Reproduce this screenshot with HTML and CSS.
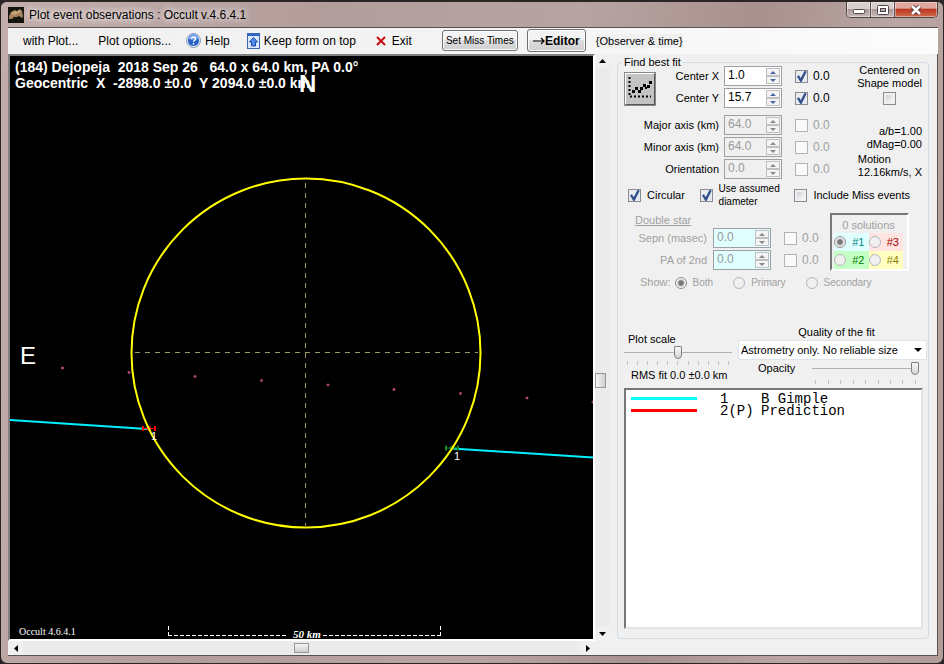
FILE: index.html
```html
<!DOCTYPE html>
<html lang="en">
<head>
  <meta charset="UTF-8" />
  <meta name="viewport" content="width=device-width, initial-scale=1.0"/>
  <title>Plot event observations : Occult v.4.6.4.1</title>
  <link rel="stylesheet" href="styles.css">
</head>
<body>
<div class="window">

  <header class="titlebar">
    <svg class="app-icon" width="16" height="16" viewBox="0 0 16 16">
      <rect width="16" height="16" fill="#15140f"/>
      <path d="M1 9l2-4 4-2 2 1 3-2 2 2 1 5-1 2-3-2-2 1-3 0-2 2-3 0z" fill="#a5805c"/>
      <path d="M3 6l4-2 2 1 3-2 1 2-4 2-4 1z" fill="#c9a57c"/>
    </svg>
    <h1>Plot event observations : Occult v.4.6.4.1</h1>
    <div class="window-buttons">
      <button class="win-btn" aria-label="Minimize">
        <svg width="14" height="10" viewBox="0 0 14 10"><rect x="1.500" y="4.500" width="11" height="4" rx="1" fill="#fff" stroke="#4d4648"/></svg>
      </button>
      <button class="win-btn" aria-label="Maximize">
        <svg width="14" height="10" viewBox="0 0 14 10"><rect x="1.500" y=".5" width="11" height="9" rx="1" fill="#fff" stroke="#4d4648"/><rect x="4.500" y="3.500" width="5" height="3" fill="#b9a9a9" stroke="#4d4648"/></svg>
      </button>
      <button class="win-btn close" aria-label="Close">
        <svg width="14" height="10" viewBox="0 0 14 10"><path d="M3 1l8 8M11 1l-8 8" stroke="#5c3a38" stroke-width="4.500"/><path d="M3 1l8 8M11 1l-8 8" stroke="#fff" stroke-width="2.600"/></svg>
      </button>
    </div>
  </header>

  <nav class="toolbar">
    <button class="menu-item with-plot">with Plot...</button>
    <button class="menu-item options">Plot options...</button>
    <button class="menu-item help">
      <svg width="15" height="15" viewBox="0 0 15 15">
        <circle cx="7.500" cy="7.500" r="7" fill="#e4ecfa" stroke="#8a9ab8"/>
        <circle cx="7.500" cy="7.500" r="5.600" fill="#2c62c8"/>
        <path d="M2.500 6a5 5 0 0 1 10 0q-5 2-10 0z" fill="#6c9cec"/>
        <path d="M5.500 6q0-2 2-2t2 1.700q0 1-1 1.600t-1 1.500M7.500 10v1.500" fill="none" stroke="#fff" stroke-width="1.400"/>
      </svg>
      Help
    </button>
    <button class="menu-item ontop">
      <svg width="13" height="16" viewBox="0 0 13 16">
        <rect x=".5" y=".5" width="12" height="15" fill="#dbe8fb" stroke="#3c66b4"/>
        <rect x="1" y="1" width="11" height="2" fill="#2f64c6"/>
        <path d="M6.500 4.500l4 4.500h-2v4h-4v-4h-2z" fill="#4f8df0" stroke="#1d4aa4"/>
      </svg>
      Keep form on top
    </button>
    <button class="menu-item exit">
      <svg width="10" height="10" viewBox="0 0 10 10"><path d="M1 1l8 8M9 1l-8 8" stroke="#c80c10" stroke-width="2"/></svg>
      Exit
    </button>
    <button class="push miss">Set Miss Times</button>
    <button class="push editor">
      <svg width="12" height="8" viewBox="0 0 12 8"><path d="M0 4h11M8 1l3 3-3 3" fill="none" stroke="#000" stroke-width="1.200"/></svg>Editor
    </button>
    <span class="observer">{Observer &amp; time}</span>
  </nav>

  <main class="workspace">
    <section class="plot-area">
      <div class="plot">
        <svg viewBox="0 0 583 583">
          <rect width="583" height="583" fill="#000"/>
          <!-- axes -->
          <path class="axis" d="M125 296.500h343M295.500 127v343"/>
          <!-- predicted track -->
          <g class="track">
            <circle cx="52.500" cy="312" r="1"/><circle cx="119" cy="316.500" r="1"/>
            <circle cx="185" cy="320.500" r="1"/><circle cx="251.500" cy="324.500" r="1"/>
            <circle cx="318" cy="329" r="1"/><circle cx="384" cy="333.500" r="1"/>
            <circle cx="450.500" cy="337.500" r="1"/><circle cx="517" cy="342" r="1"/>
            <circle cx="583" cy="346" r="1"/>
          </g>
          <!-- chords -->
          <path class="chord" d="M0 364L137 373M442 392.500L583 401.500"/>
          <path class="event-d bar" d="M133 370v5M145 370v5"/>
          <path class="event-d" d="M133 372.500h12"/>
          <circle class="event-d" cx="139" cy="372.500" r="2"/>
          <path class="event-r bar" d="M436 389.500v5M448 389.500v5"/>
          <path class="event-r" d="M436 392h12"/>
          <circle class="event-r" cx="442" cy="392" r="2"/>
          <circle class="body" cx="296" cy="297" r="174.500"/>
          <text class="chord-no" x="141" y="384">1</text>
          <text class="chord-no" x="444" y="404">1</text>
          <!-- scale bar -->
          <path class="scale" d="M158 579.500h120M313 579.500h118"/>
          <path class="scale" d="M158.500 570v10M430.500 570v10"/>
          <text class="scale-label" x="283" y="582">50 km</text>
          <text class="version" x="9" y="579">Occult 4.6.4.1</text>
          <text class="heading" x="5" y="16">(184) Dejopeja  2018 Sep 26   64.0 x 64.0 km, PA 0.0°</text>
          <text class="heading" x="5" y="32">Geocentric  X  -2898.0 ±0.0  Y 2094.0 ±0.0 km</text>
          <text class="compass north" x="289" y="36">N</text>
          <text class="compass" x="10" y="308">E</text>
        </svg>
      </div>
      <div class="scroll vertical">
        <button aria-label="Scroll up"><svg width="7" height="4" viewBox="0 0 7 4"><path d="M0 4l3.500-4 3.500 4z"/></svg></button>
        <span class="before"></span><span class="thumb"></span><span class="after"></span>
        <button aria-label="Scroll down"><svg width="7" height="4" viewBox="0 0 7 4"><path d="M0 0h7l-3.500 4z"/></svg></button>
      </div>
      <div class="scroll horizontal">
        <button aria-label="Scroll left"><svg width="4" height="7" viewBox="0 0 4 7"><path d="M4 0v7l-4-3.500z"/></svg></button>
        <span class="thumb"></span>
        <button aria-label="Scroll right"><svg width="4" height="7" viewBox="0 0 4 7"><path d="M0 0v7l4-3.500z"/></svg></button>
      </div>
    </section>

    <fieldset class="panel">
      <legend>Find best fit</legend>

      <div class="fit">
        <div class="fit-grid">
          <button class="fit-button" aria-label="Find best fit">
            <svg width="26" height="26" viewBox="0 0 26 26">
              <path d="M2.500 3v20M3 22.500h21" fill="none" stroke="#000" stroke-width="2" stroke-dasharray="2 2"/>
              <path d="M5 18l3-3M10 15l3 3M17 13l3-3" fill="none" stroke="#fff"/>
              <path d="M5 16h3v3h-3zM8 13h3v3h-3zM11 16h3v3h-3zM13 13h3v3h-3zM16 10h3v3h-3zM18 13h2v2h-2zM20 11h3v3h-3zM22 7h3v3h-3z"/>
            </svg>
          </button>
          <label for="cx">Center X</label>
          <div class="spin"><input id="cx" type="text" value="1.0"><span class="arrows"><button aria-label="Up"></button><button aria-label="Down"></button></span></div>
          <label class="flag"><input type="checkbox" checked>0.0</label>
          <label for="cy">Center Y</label>
          <div class="spin"><input id="cy" type="text" value="15.7"><span class="arrows"><button aria-label="Up"></button><button aria-label="Down"></button></span></div>
          <label class="flag"><input type="checkbox" checked>0.0</label>

          <label class="wide first" for="major">Major axis (km)</label>
          <div class="spin first"><input id="major" type="text" value="64.0" disabled><span class="arrows"><button aria-label="Up" disabled></button><button aria-label="Down" disabled></button></span></div>
          <label class="flag off first"><input type="checkbox" disabled>0.0</label>
          <label class="wide" for="minor">Minor axis (km)</label>
          <div class="spin"><input id="minor" type="text" value="64.0" disabled><span class="arrows"><button aria-label="Up" disabled></button><button aria-label="Down" disabled></button></span></div>
          <label class="flag off"><input type="checkbox" disabled>0.0</label>
          <label class="wide" for="orient">Orientation</label>
          <div class="spin"><input id="orient" type="text" value="0.0" disabled><span class="arrows"><button aria-label="Up" disabled></button><button aria-label="Down" disabled></button></span></div>
          <label class="flag off"><input type="checkbox" disabled>0.0</label>
        </div>
        <div class="fit-side">
          <label class="shape">Centered on<br>Shape model<input type="checkbox"></label>
          <p class="ratio">a/b=1.00<br>dMag=0.00</p>
          <p class="motion">Motion<br>12.16km/s, X</p>
        </div>
      </div>

      <div class="options-row">
        <label><input type="checkbox" checked>Circular</label>
        <label class="assumed"><input type="checkbox" checked><span>Use assumed<br>diameter</span></label>
        <label><input type="checkbox">Include Miss events</label>
      </div>

      <div class="double">
        <div class="double-fields">
          <h2>Double star</h2>
          <label for="sepn">Sepn (masec)</label>
          <div class="spin"><input id="sepn" type="text" value="0.0" disabled><span class="arrows"><button aria-label="Up" disabled></button><button aria-label="Down" disabled></button></span></div>
          <label class="flag off"><input type="checkbox" disabled>0.0</label>
          <label for="pa">PA of 2nd</label>
          <div class="spin"><input id="pa" type="text" value="0.0" disabled><span class="arrows"><button aria-label="Up" disabled></button><button aria-label="Down" disabled></button></span></div>
          <label class="flag off"><input type="checkbox" disabled>0.0</label>
        </div>
        <div class="solutions">
          <p>0 solutions</p>
          <label class="s1"><input type="radio" name="solution" checked disabled>#1</label>
          <label class="s3"><input type="radio" name="solution" disabled>#3</label>
          <label class="s2"><input type="radio" name="solution" disabled>#2</label>
          <label class="s4"><input type="radio" name="solution" disabled>#4</label>
        </div>
      </div>
      <div class="show">
        <span>Show:</span>
        <label><input type="radio" name="show" checked disabled>Both</label>
        <label><input type="radio" name="show" disabled>Primary</label>
        <label><input type="radio" name="show" disabled>Secondary</label>
      </div>

      <div class="display">
        <div class="scale-box">
          <label for="plotScale">Plot scale</label>
          <input id="plotScale" type="range" min="0" max="100" value="50">
          <div class="ticks"><i></i><i></i><i></i><i></i><i></i><i></i><i></i><i></i><i></i><i></i><i></i></div>
          <p>RMS fit 0.0 ±0.0 km</p>
        </div>
        <div class="quality-box">
          <label for="quality">Quality of the fit</label>
          <select id="quality"><option>Astrometry only. No reliable size</option></select>
          <div class="opacity">
            <label for="opacity">Opacity</label>
            <div class="opacity-slider">
              <input id="opacity" type="range" min="0" max="100" value="100">
              <div class="ticks"><i></i><i></i><i></i><i></i><i></i><i></i><i></i><i></i><i></i></div>
            </div>
          </div>
        </div>
      </div>

      <ul class="observers">
        <li><span class="key cyan"></span><span class="num">1</span><span>B Gimple</span></li>
        <li><span class="key red"></span><span class="num">2(P)</span><span>Prediction</span></li>
      </ul>
    </fieldset>
  </main>
</div>
</body>
</html>
```
FILE: styles.css
```css
* { margin: 0; padding: 0; box-sizing: border-box; }

body {
  font-family: "Liberation Sans", Arial, sans-serif;
  font-size: 12px;
  line-height: 14px;
  color: #000;
  background: #2a2627;
}

button, input, select {
  font: inherit;
  color: inherit;
}

.window {
  min-height: 100vh;
  display: flex;
  flex-direction: column;
  padding: 0 5px 7px 7px;
  border: 1px solid #2b2526;
  border-top-width: 2px;
  border-radius: 7px;
  background: linear-gradient(100deg, #c2adab 0%, #b29d9b 30%, #b7a4a2 55%, #a8918e 72%, #b9a6a3 85%, #b09c99 100%);
}

/* title bar */
.titlebar {
  display: flex;
  align-items: center;
  height: 25px;
  flex: none;
}

.titlebar h1 {
  flex: 1;
  margin-left: 5px;
  font-size: 12px;
  font-weight: normal;
  text-shadow: 0 0 6px #fff, 0 0 8px #fff;
}

.window-buttons {
  display: flex;
  align-self: flex-start;
  border: 1px solid #4f4444;
  border-top: 0;
  border-radius: 0 0 5px 5px;
  overflow: hidden;
}

.win-btn {
  display: flex;
  align-items: center;
  justify-content: center;
  width: 24px;
  height: 15px;
  border: 0;
  border-right: 1px solid #5a4e4e;
  background: linear-gradient(#d9cfce 0 45%, #a89795 50%, #c8bab8);
  box-shadow: inset 0 0 0 1px rgba(255,255,255,0.4);
}

.win-btn.close {
  width: 42px;
  border-right: 0;
  background: linear-gradient(#dfa79b 0 40%, #bb3820 50%, #d06b4c);
}

/* toolbar */
.toolbar {
  display: flex;
  align-items: center;
  height: 27px;
  flex: none;
  padding-bottom: 1px;
  border-top: 1px solid #5d5051;
  background: linear-gradient(to right, #f0f0f0, #f4f4f4 50%, #fcfcfc);
}

.menu-item {
  display: flex;
  align-items: center;
  gap: 4px;
  border: 0;
  background: none;
  white-space: nowrap;
}

.with-plot { margin-left: 15px; }
.options { margin-left: 20px; }
.help { margin-left: 15px; }
.ontop { margin-left: 17px; }
.exit { margin-left: 20px; gap: 6px; }

.push {
  border: 1px solid #707070;
  border-radius: 3px;
  background: linear-gradient(#f3f3f3 0 45%, #dddddd 50%, #cfcfcf);
  box-shadow: inset 0 0 0 1px #fbfbfb;
  white-space: nowrap;
}

.miss {
  margin-left: 30px;
  width: 76px;
  height: 21px;
  font-size: 10px;
}

.editor {
  display: flex;
  align-items: center;
  justify-content: center;
  margin-left: 9px;
  width: 59px;
  height: 23px;
  font-weight: bold;
}

.observer {
  margin-left: 10px;
  font-size: 11px;
  background: #f0f0f0;
  white-space: nowrap;
}

.workspace {
  flex: 1;
  display: grid;
  grid-template-columns: minmax(0, 1fr) 327px;
  background: #f0f0f0;
  border-right: 1px solid #5d5051;
  border-bottom: 1px solid #5d5051;
}

/* plot */
.plot-area {
  display: grid;
  grid-template-columns: minmax(0, 1fr) 15px;
  grid-template-rows: 1fr 14px;
}

.plot {
  border: 2px solid #fff;
  border-top-color: #808080;
  border-left-color: #808080;
  background: #000;
}

.plot svg {
  display: block;
  width: 100%;
}

.axis {
  stroke: #a09a62;
  stroke-dasharray: 5 5;
}

.track { fill: #7a3050; stroke: #d0508c; }
.chord { stroke: #00f0ff; stroke-width: 2; }
.event-d { fill: none; stroke: #f00; }
.event-r { fill: none; stroke: #0a8a1a; }
.bar { stroke-width: 2; }
.body { fill: none; stroke: #ff0; stroke-width: 2; }
.scale { stroke: #fff; stroke-dasharray: 4 2; }

.plot text { fill: #fff; white-space: pre; }
.chord-no { font-size: 11px; }
.heading { font-size: 14px; font-weight: bold; }
.compass { font-size: 24px; }
.compass.north { font-weight: bold; }
.version { font: 10px "Liberation Serif", serif; }
.scale-label { font: italic bold 11px "Liberation Serif", serif; }

.scroll {
  display: flex;
  align-items: center;
  background: #ebebeb;
}

.scroll.vertical { flex-direction: column; align-items: stretch; padding-right: 2px; }
.scroll.horizontal { justify-content: space-between; }

.scroll button {
  display: flex;
  align-items: center;
  justify-content: center;
  flex: none;
  width: 15px;
  height: 14px;
  border: 0;
  background: #f0f0f0;
}

.before { flex: 56; }
.after { flex: 44; }

.thumb {
  flex: none;
  width: 15px;
  height: 10px;
  border: 1px solid #979797;
  background: linear-gradient(#f5f5f5, #cfcfcf);
}

.vertical .thumb {
  width: 11px;
  height: 15px;
  background: linear-gradient(to right, #f5f5f5, #cfcfcf);
}

/* right panel */
.panel {
  display: flex;
  flex-direction: column;
  margin: 4px 8px 16px 7px;
  padding: 0 1px 9px 6px;
  border: 1px solid #d0dce6;
  border-radius: 4px;
  font-size: 11px;
  line-height: 13px;
  min-width: 0;
}

.panel legend {
  line-height: 8px;
  padding: 0 2px;
  margin-left: -2px;
}

.fit { display: flex; margin-top: -1px; }

.fit-grid {
  display: grid;
  grid-template-columns: 32px 58px 58px auto;
  grid-template-rows: 22px 22px 27px 22px 22px;
  column-gap: 5px;
  align-items: center;
}

.fit-grid > label { text-align: right; white-space: nowrap; }
.fit-grid .wide { grid-column: span 2; }
.fit-grid .first { margin-top: 5px; }

.fit-button {
  grid-row: span 2;
  width: 32px;
  height: 34px;
  margin-top: 3px;
  border: 2px solid;
  border-color: #fff #555 #555 #fff;
  outline: 1px solid #888;
  outline-offset: -1px;
  background: #c4c4c4;
}

.spin {
  display: flex;
  height: 20px;
  padding: 1px;
  border: 1px solid #a0a0a4;
  background: #fff;
}

.spin input {
  flex: 1;
  min-width: 0;
  padding: 0 2px 2px;
  border: 0;
  background: none;
  font-size: 12px;
}

.spin:has(input:disabled) { background: #f0f0f0; color: #999; }

.arrows {
  display: flex;
  flex-direction: column;
  width: 14px;
}

.arrows button {
  display: flex;
  align-items: center;
  justify-content: center;
  flex: 1;
  border: 1px solid #c0c0c4;
  background: #f4f4f4;
}

.arrows button::before {
  content: "";
  border: 3px solid transparent;
  border-top: 0;
  border-bottom-color: #4a66a8;
}

.arrows button:last-child::before {
  border-top: 3px solid #4a66a8;
  border-bottom: 0;
}

.arrows button:disabled::before { border-bottom-color: #888; border-top-color: #888; }

input[type="checkbox"] {
  appearance: none;
  flex: none;
  width: 13px;
  height: 13px;
  border: 1px solid #8a8c90;
  background: linear-gradient(135deg, #ccd0d6, #fafafa) content-box;
  padding: 2px;
  background-color: #f6f6f6;
}

input[type="checkbox"]:checked {
  background: url('data:image/svg+xml,<svg xmlns="http://www.w3.org/2000/svg" viewBox="0 0 11 11"><path d="M2.500 5l2.500 4 4-8" fill="none" stroke="%2334508f" stroke-width="2"/></svg>') border-box #e8ebf0;
}

input[type="checkbox"]:disabled { background: #fafafa; border-color: #b4b4b4; }

input[type="radio"] {
  appearance: none;
  flex: none;
  width: 12px;
  height: 12px;
  border: 1px solid #b6b6b6;
  border-radius: 50%;
  background: #f0f0f0;
}

input[type="radio"]:checked {
  border-color: #8e8e8e;
  background: radial-gradient(circle, #777 0 2px, #f0f0f0 4px);
}

.flag {
  display: flex;
  align-items: center;
  gap: 5px;
  padding-left: 8px;
  font-size: 12px;
}

.off { color: #a0a0a0; }

.fit-side {
  flex: 1;
  display: flex;
  flex-direction: column;
  margin-top: -1px;
  padding-right: 5px;
}

.shape {
  display: flex;
  flex-direction: column;
  align-items: center;
  align-self: flex-end;
  text-align: center;
  white-space: nowrap;
}

.shape br { display: block; }
.shape input { margin-top: 2px; }

.ratio { margin-top: 20px; text-align: right; }
.motion { margin-top: 2px; align-self: flex-end; white-space: nowrap; }

.options-row {
  display: flex;
  align-items: center;
  justify-content: space-between;
  margin: 2px 17px 0 4px;
  white-space: nowrap;
}

.options-row label {
  display: flex;
  align-items: center;
  gap: 6px;
}

.assumed { font-size: 10px; }

.double {
  display: flex;
  justify-content: space-between;
  margin-top: 5px;
  padding-right: 18px;
  color: #a0a0a0;
}

.double-fields {
  display: grid;
  grid-template-columns: 83px 58px auto;
  grid-template-rows: 14px 22px 22px;
  column-gap: 6px;
  align-items: center;
}

.double-fields h2 {
  grid-column: span 3;
  margin-left: 11px;
  font-size: 11px;
  font-weight: normal;
  text-decoration: underline;
}

.double-fields > label { text-align: right; white-space: nowrap; }
.double-fields .spin:has(input:disabled) { background: #e0ffff; }
.double-fields .flag { padding-left: 7px; }

.solutions {
  display: grid;
  grid-template-columns: 1fr 1fr;
  align-self: flex-start;
  width: 79px;
  padding: 4px 4px 0 2px;
  border: 2px solid #fff;
  border-top-color: #777;
  border-left-color: #777;
}

.solutions p { grid-column: span 2; text-align: center; margin-bottom: 1px; }
.solutions label { display: flex; align-items: center; justify-content: space-between; height: 18px; padding-right: 4px; }
.s1 { background: #e0ffff; color: #008b8b; }
.s2 { background: #c4ffc4; color: #008000; }
.s3 { background: #ffe4e1; color: #a00000; }
.s4 { background: #ffffc0; color: #908000; }

.show {
  display: flex;
  align-items: center;
  gap: 20px;
  margin: 5px 0 0 16px;
  color: #a0a0a0;
}

.show span { margin-right: -16px; }

.show label {
  display: flex;
  align-items: center;
  gap: 6px;
  font-size: 10px;
}

/* sliders */
.display {
  display: grid;
  grid-template-columns: 108px 189px;
  justify-content: space-between;
  margin-top: 37px;
}

.scale-box, .quality-box { display: flex; flex-direction: column; }
.scale-box { padding-top: 7px; }
.scale-box > label { padding-left: 4px; }
.scale-box p { padding-left: 7px; margin-top: 4px; white-space: nowrap; }

input[type="range"] {
  appearance: none;
  width: 100%;
  height: 13px;
  background: linear-gradient(#b0b0b0, #b0b0b0) center / 100% 1px no-repeat;
}

input[type="range"]::-webkit-slider-thumb {
  appearance: none;
  width: 8px;
  height: 13px;
  border: 1px solid #808080;
  border-radius: 1px 1px 4px 4px;
  background: linear-gradient(#fafafa, #d4d4d4);
}

.ticks {
  display: flex;
  justify-content: space-between;
  padding: 0 3px;
  margin-top: 2px;
}

.ticks i { width: 1px; height: 4px; background: #c0c0c0; }

.quality-box > label { text-align: center; padding-left: 8px; }

select {
  appearance: none;
  height: 20px;
  margin-top: 1px;
  padding: 0 20px 0 2px;
  border: 1px solid #e0e3ea;
  background: url('data:image/svg+xml,<svg xmlns="http://www.w3.org/2000/svg" width="8" height="4"><path d="M0 0h8L4 4z"/></svg>') right 4px center no-repeat #fff;
}

.opacity { display: flex; margin-top: 2px; padding-left: 20px; }
.opacity-slider { flex: 1; margin-left: 17px; padding-right: 8px; }

.observers {
  flex: 1;
  margin: 4px 4px 0 0;
  padding: 3px 5px;
  border: 2px solid #e3e3e3;
  border-top-color: #777;
  border-left-color: #777;
  background: #fff;
  list-style: none;
  font: 14px "Liberation Mono", "Courier New", monospace;
  line-height: 12px;
}

.observers li { display: flex; align-items: center; }
.key { width: 66px; height: 3px; margin: 0 23px 2px 0; }
.cyan { background: #0ff; }
.red { background: #f00; }
.num { width: 41px; }
```
